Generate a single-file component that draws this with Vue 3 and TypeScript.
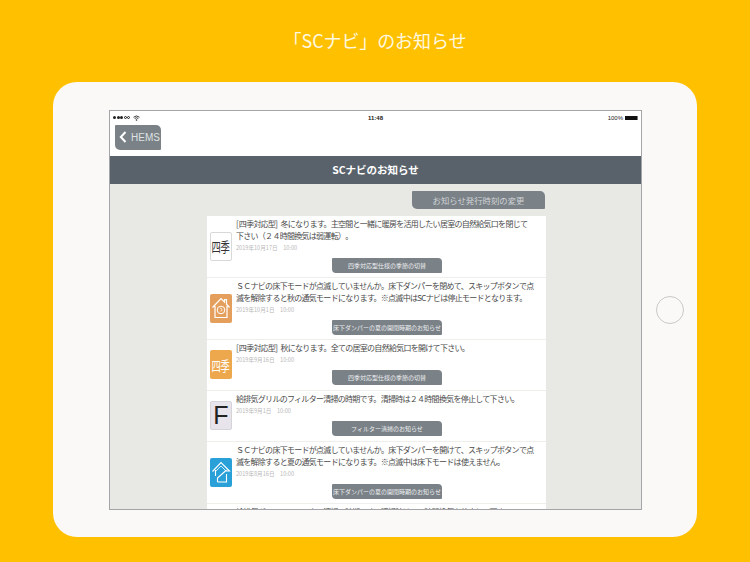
<script setup lang="ts">
interface Notice {
  icon: 'season' | 'seasonOrange' | 'houseOrange' | 'filter' | 'houseBlue'
  lines: string[]
  date: string
  action: string
}

const notices: Notice[] = [
  {
    icon: 'season',
    lines: ['[\u2009四季対応型]\u2002冬になります。主空間と一緒に暖房を活用したい居室の自然給気口を閉じて', '下さい（２４時間換気は弱運転）。'],
    date: '2019年10月17日　10:00',
    action: '四季対応型仕様の季節の切替',
  },
  {
    icon: 'houseOrange',
    lines: ['ＳＣナビの床下モードが点滅していませんか。床下ダンパーを閉めて、スキップボタンで点', '滅を解除すると秋の通気モードになります。※点滅中はSCナビは停止モードとなります。'],
    date: '2019年10月1日　10:00',
    action: '床下ダンパーの夏の開閉時期のお知らせ',
  },
  {
    icon: 'seasonOrange',
    lines: ['[\u2009四季対応型]\u2002秋になります。全ての居室の自然給気口を開けて下さい。'],
    date: '2019年9月16日　10:00',
    action: '四季対応型仕様の季節の切替',
  },
  {
    icon: 'filter',
    lines: ['給排気グリルのフィルター清掃の時期です。清掃時は２４時間換気を停止して下さい。'],
    date: '2019年9月1日　10:00',
    action: 'フィルター清掃のお知らせ',
  },
  {
    icon: 'houseBlue',
    lines: ['ＳＣナビの床下モードが点滅していませんか。床下ダンパーを開けて、スキップボタンで点', '滅を解除すると夏の通気モードになります。※点滅中は床下モードは使えません。'],
    date: '2019年8月16日　10:00',
    action: '床下ダンパーの夏の開閉時期のお知らせ',
  },
  {
    icon: 'filter',
    lines: ['給排気グリルのフィルター清掃の時期です。清掃時は２４時間換気を停止して下さい。'],
    date: '2019年8月1日　10:00',
    action: 'フィルター清掃のお知らせ',
  },
]
</script>

<template>
  <div class="page">
    <h1 class="title">「SCナビ」のお知らせ</h1>
    <div class="device">
      <div class="screen">
        <div class="status">
          <span class="signal">
            <i class="dot"></i><i class="dot"></i><i class="dot"></i><i class="dot off"></i><i class="dot off"></i>
            <svg class="wifi" width="7" height="6" viewBox="0 0 14 12">
              <path d="M1 4.5a9 9 0 0 1 12 0M3.4 7a5.5 5.5 0 0 1 7.2 0" fill="none" stroke="#222" stroke-width="1.8" />
              <circle cx="7" cy="10" r="1.6" fill="#222" />
            </svg>
          </span>
          <span class="clock">11:48</span>
          <span class="battery">100%<i class="cell"></i></span>
        </div>
        <div class="nav">
          <button class="back">
            <svg width="8" height="12" viewBox="0 0 8 12">
              <path d="M6.5 1 1.8 6l4.7 5" fill="none" stroke="#fff" stroke-width="2" />
            </svg>
            <span>HEMS</span>
          </button>
        </div>
        <div class="header">SCナビのお知らせ</div>
        <div class="content">
          <div class="toolbar">
            <button class="change">お知らせ発行時刻の変更</button>
          </div>
          <ul class="list">
            <li v-for="(n, i) in notices" :key="i" class="row" :class="{ single: n.lines.length === 1 }">
              <div class="icon" :class="n.icon">
                <span v-if="n.icon === 'season' || n.icon === 'seasonOrange'" class="glyphs">四季</span>
                <template v-else-if="n.icon === 'filter'">F</template>
                <svg v-else-if="n.icon === 'houseOrange'" width="22" height="29" viewBox="0 0 22 29">
                  <path d="M2.5 13.5 11 4.500l3.500 3.600V5.600h2v4.600l3 3.300M5 12v11.500h12V12" fill="none" stroke="#fff" stroke-width="1.2" />
                  <circle cx="11" cy="16" r="3.800" fill="none" stroke="#fff" stroke-width="1" />
                  <path d="M10 14.500c2-1 2.800 2.500.5 2.800" fill="none" stroke="#fff" stroke-width=".8" />
                </svg>
                <svg v-else width="22" height="29" viewBox="0 0 22 29">
                  <path d="M2.500 13.500 11 4.500l8.500 8.500h-3.500M5.500 12v6M7.500 24v-4l9-8M16.500 16v8H7.500" fill="none" stroke="#fff" stroke-width="1.1" />
                  <path d="M5 14 11 8l5 5" fill="none" stroke="#fff" stroke-width=".8" />
                </svg>
              </div>
              <div class="body">
                <p v-for="line in n.lines" :key="line" class="line">{{ line }}</p>
                <p class="date">{{ n.date }}</p>
                <button class="action">{{ n.action }}</button>
              </div>
            </li>
          </ul>
        </div>
      </div>
      <div class="home"></div>
    </div>
  </div>
</template>

<style>
html, body { margin: 0; background: #ffc000; }
</style>

<style scoped>
.page {
  width: 750px;
  height: 562px;
  overflow: hidden;
  background: #ffc000;
  font-family: "Noto Sans CJK JP", "Liberation Sans", sans-serif;
  text-spacing-trim: space-all;
}
.title {
  margin: 0;
  height: 82px;
  display: flex;
  align-items: center;
  justify-content: center;
  padding-bottom: 3px;
  box-sizing: border-box;
  font-size: 18px;
  font-weight: 400;
  letter-spacing: -0.1px;
  color: #fff8e0;
}
.device {
  width: 644px;
  height: 455px;
  margin-left: 53px;
  padding-left: 56px;
  box-sizing: border-box;
  display: flex;
  align-items: center;
  gap: 14px;
  background: #fbf9f7;
  border-radius: 24px;
}
.screen {
  width: 533px;
  height: 400px;
  box-sizing: border-box;
  border: 1px solid #a3a5a9;
  background: #e8e8e4;
  overflow: hidden;
  flex: none;
}
.home {
  width: 28px;
  height: 28px;
  box-sizing: border-box;
  border: 1px solid #c9c9c9;
  border-radius: 50%;
  flex: none;
}
.status {
  height: 14px;
  background: #fff;
  display: flex;
  align-items: center;
  justify-content: space-between;
  padding: 0 3px;
  font-family: "Liberation Sans", sans-serif;
  font-size: 6px;
  color: #222;
  position: relative;
}
.signal { display: flex; align-items: center; gap: 0.5px; }
.dot { width: 3px; height: 3px; border-radius: 50%; background: #222; box-sizing: border-box; }
.dot.off { background: none; border: 0.5px solid #222; }
.wifi { margin-left: 2px; }
.clock { position: absolute; left: 0; right: 0; text-align: center; font-weight: 700; }
.battery { display: flex; align-items: center; gap: 2px; }
.cell { width: 12px; height: 4px; background: #111; border-right: 1px solid #777; }
.nav {
  height: 31px;
  background: #fff;
  padding-left: 5px;
  display: flex;
  align-items: flex-start;
}
.back {
  width: 46px;
  height: 25px;
  padding: 0 0 0 4px;
  border: 0;
  border-radius: 1px 5px 1px 5px;
  background: #7a8187;
  color: #dfe1e3;
  display: flex;
  align-items: center;
  gap: 4px;
  font-family: "Liberation Sans", sans-serif;
  font-size: 10px;
  white-space: nowrap;
}
.header {
  height: 28px;
  background: #59626a;
  color: #fff;
  font-size: 10.5px;
  font-weight: 700;
  display: flex;
  align-items: center;
  justify-content: center;
}
.toolbar {
  padding: 7px 0 7px 302px;
  display: flex;
}
.change {
  width: 133px;
  height: 18px;
  padding: 0;
  border: 0;
  border-radius: 1px 5px 1px 5px;
  background: #7a8187;
  color: #d0d3d6;
  font-family: inherit;
  font-size: 8.4px;
  white-space: nowrap;
}
.list {
  list-style: none;
  margin: 0 0 0 97px;
  padding: 0;
  width: 339px;
  background: #fff;
}
.row {
  display: flex;
  align-items: center;
  gap: 4px;
  padding-left: 3px;
  border-bottom: 1px solid #eeeeea;
}
.icon {
  width: 22px;
  height: 29px;
  box-sizing: border-box;
  flex: none;
  border-radius: 2px;
  display: flex;
  align-items: center;
  justify-content: center;
}
.glyphs {
  font-size: 14px;
  white-space: nowrap;
  display: inline-block;
  transform: scaleX(0.66);
  letter-spacing: -0.4px;
}
.season { background: #fff; border: 1px solid #d9d9d9; color: #333; }
.seasonOrange { background: #eda84e; color: #fff; }
.houseOrange { background: #e59f5c; }
.filter {
  background: #e8e4ec;
  border: 1px solid #d6d4d8;
  color: #222;
  font-family: "Liberation Sans", sans-serif;
  font-size: 25px;
}
.houseBlue { background: #2aa0d8; }
.body {
  flex: 1;
  padding: 2.5px 0 4px;
  display: flex;
  flex-direction: column;
  color: #4a4a4a;
}
.single .body { padding-bottom: 5px; }
.line {
  margin: 0;
  height: 12px;
  line-height: 12px;
  font-size: 8px;
  letter-spacing: -0.72px;
  white-space: nowrap;
}
.date {
  margin: 0;
  height: 12.5px;
  line-height: 12.5px;
  font-size: 5.6px;
  color: #b8b8b8;
  white-space: nowrap;
}
.action {
  align-self: flex-start;
  margin: 3px 0 0 96px;
  width: 110px;
  height: 15px;
  padding: 0;
  border: 0;
  border-radius: 1px 4px 1px 4px;
  background: #7a8187;
  color: #eef0f1;
  font-family: inherit;
  font-size: 6px;
  white-space: nowrap;
}
</style>
